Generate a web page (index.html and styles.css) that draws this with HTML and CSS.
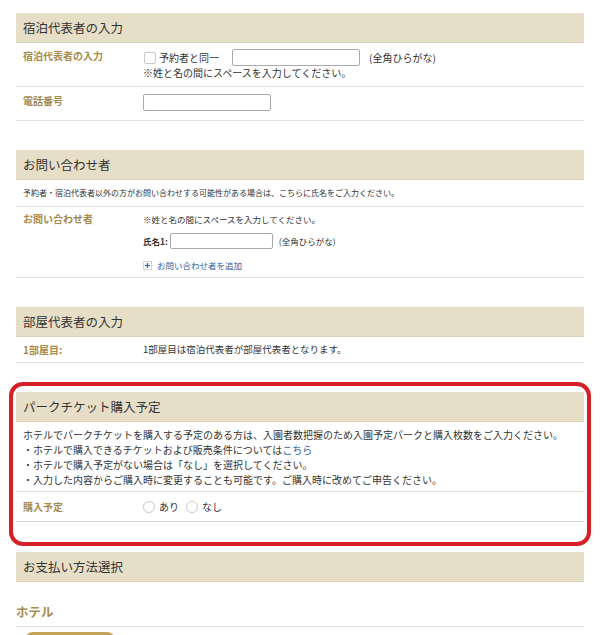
FILE: index.html
```html
<!DOCTYPE html>
<html lang="ja">
<head>
    <meta charset="UTF-8">
    <meta name="viewport" content="width=device-width, initial-scale=1.0">
    <title>ご予約情報の入力</title>
    <link rel="stylesheet" href="styles.css">
</head>
<body>
    <div class="container">

        <!-- 宿泊代表者 -->
        <div class="section first">
            <h2 class="section-title">宿泊代表者の入力</h2>
            <div class="row row-guest">
                <div class="row-label">宿泊代表者の入力</div>
                <div class="row-value">
                    <div class="line">
                        <label class="check"><span class="checkbox"></span>予約者と同一</label>
                        <input type="text" class="field">
                        <span class="hint">(全角ひらがな)</span>
                    </div>
                    <div class="note">※姓と名の間にスペースを入力してください。</div>
                </div>
            </div>
            <div class="row row-tel">
                <div class="row-label">電話番号</div>
                <div class="row-value">
                    <input type="text" class="field">
                </div>
            </div>
        </div>

        <!-- お問い合わせ者 -->
        <div class="section">
            <h2 class="section-title">お問い合わせ者</h2>
            <div class="row row-desc">予約者・宿泊代表者以外の方がお問い合わせする可能性がある場合は、こちらに氏名をご入力ください。</div>
            <div class="row row-contact">
                <div class="row-label">お問い合わせ者</div>
                <div class="row-value small">
                    <div class="note">※姓と名の間にスペースを入力してください。</div>
                    <div class="line name-line">
                        <span class="name-label">氏名1:</span>
                        <input type="text" class="field field-short">
                        <span class="hint">(全角ひらがな)</span>
                    </div>
                    <a href="#" class="add-link">
                        <svg width="9" height="9" viewBox="0 0 9 9">
                            <rect x="0.5" y="0.5" width="8" height="8" fill="#fff" stroke="#d5d5d5"/>
                            <path d="M4.5 2v5M2 4.5h5" stroke="#2f62a8" stroke-width="1.2"/>
                        </svg>
                        お問い合わせ者を追加
                    </a>
                </div>
            </div>
        </div>

        <!-- 部屋代表者 -->
        <div class="section">
            <h2 class="section-title">部屋代表者の入力</h2>
            <div class="row row-room">
                <div class="row-label">1部屋目:</div>
                <div class="row-value plain">1部屋目は宿泊代表者が部屋代表者となります。</div>
            </div>
        </div>

        <!-- パークチケット (注目枠) -->
        <div class="highlight">
            <div class="section">
                <h2 class="section-title">パークチケット購入予定</h2>
                <div class="row row-info">
                    <p>ホテルでパークチケットを購入する予定のある方は、入園者数把握のため入園予定パークと購入枚数をご入力ください。</p>
                    <p>・ホテルで購入できるチケットおよび販売条件については<a href="#">こちら</a></p>
                    <p>・ホテルで購入予定がない場合は「なし」を選択してください。</p>
                    <p>・入力した内容からご購入時に変更することも可能です。ご購入時に改めてご申告ください。</p>
                </div>
                <div class="row row-plan">
                    <div class="row-label">購入予定</div>
                    <div class="row-value">
                        <label class="radio"><span class="radio-dot"></span>あり</label>
                        <label class="radio"><span class="radio-dot"></span>なし</label>
                    </div>
                </div>
            </div>
        </div>

        <!-- お支払い -->
        <div class="section payment">
            <h2 class="section-title">お支払い方法選択</h2>
            <h3 class="sub-title">ホテル</h3>
            <div class="tab"></div>
        </div>

    </div>
</body>
</html>
```

FILE: styles.css
```css
body {
    margin: 0;
    background-color: #fff;
    font-family: "Noto Sans CJK JP", "Noto Sans", sans-serif;
    color: #333;
    overflow: hidden;
}
.container {
    padding: 13px 16px 0;
}
.section {
    margin-top: 29px;
}
.section.first {
    margin-top: 0;
}
.section-title {
    margin: 0;
    padding-left: 7px;
    height: 30px;
    line-height: 30px;
    font-size: 12.5px;
    font-weight: normal;
    color: #333;
    background-color: #e7dec7;
    border-bottom: 1px solid #ddd3ba;
    box-sizing: border-box;
}
.row {
    display: flex;
    border-bottom: 1px solid #e3e0d8;
    font-size: 10px;
}
.row-label {
    width: 120px;
    padding-left: 7px;
    font-weight: bold;
    color: #a68b4c;
    flex-shrink: 0;
}
.row-value {
    flex: 1;
}
.line {
    display: flex;
    align-items: center;
}
.field {
    width: 128px;
    height: 17px;
    margin: 0;
    padding: 0 3px;
    border: 1px solid #a9a9a9;
    border-radius: 2px;
    box-sizing: border-box;
    background: #fff;
    outline: none;
}
.field-short {
    width: 103px;
    height: 16px;
}
.hint {
    margin-left: 9px;
}
.note {
    line-height: 14px;
}
.check {
    display: flex;
    align-items: center;
    width: 88px;
    padding-left: 1px;
}
.checkbox {
    width: 10px;
    height: 10px;
    margin-right: 3px;
    border: 1px solid #c8c8c8;
    border-radius: 2px;
    background: #fff;
}

/* 宿泊代表者 */
.row-guest {
    height: 44px;
    box-sizing: border-box;
}
.row-guest .row-label {
    padding-top: 7px;
    line-height: 12px;
}
.row-guest .row-value {
    padding-top: 6px;
}
.row-tel {
    height: 34px;
    box-sizing: border-box;
}
.row-tel .row-label {
    padding-top: 8px;
    line-height: 12px;
}
.row-tel .row-value {
    padding-top: 7px;
}

/* お問い合わせ者 */
.row-desc {
    display: block;
    padding-left: 7px;
    height: 27px;
    line-height: 26px;
    font-size: 8px;
    box-sizing: border-box;
}
.row-contact {
    height: 71px;
    box-sizing: border-box;
}
.row-contact .row-label {
    padding-top: 6px;
    line-height: 12px;
}
.row-value.small {
    font-size: 8.5px;
    padding-top: 6px;
}
.row-value.small .note {
    line-height: 12px;
}
.name-line {
    margin-top: 8px;
}
.name-label {
    font-weight: bold;
    margin-right: 2px;
}
.name-line .hint {
    margin-left: 6px;
}
.add-link {
    display: flex;
    align-items: center;
    gap: 5px;
    margin-top: 10px;
    line-height: 12px;
    color: #2f62a8;
    text-decoration: none;
}

/* 部屋代表者 */
.row-room {
    height: 26px;
    line-height: 25px;
    box-sizing: border-box;
}
.row-value.plain {
    font-size: 9.5px;
}

/* 注目枠 */
.highlight {
    margin: 19px -7px 0;
    padding: 6px 3px 20px;
    border: 4px solid #d61f27;
    border-radius: 14px;
}
.highlight .section {
    margin-top: 0;
}
.row-info {
    display: block;
    padding: 5px 7px 4px;
}
.row-info p {
    margin: 0;
    line-height: 15px;
}
.row-info a {
    color: #2f62a8;
    text-decoration: none;
}
.row-plan {
    height: 30px;
    line-height: 29px;
    box-sizing: border-box;
    border-bottom-color: #d6d6d6;
}
.row-plan .row-value {
    display: flex;
    align-items: center;
    gap: 7px;
}
.radio {
    display: flex;
    align-items: center;
}
.radio-dot {
    width: 10px;
    height: 10px;
    margin-right: 4px;
    border: 1px solid #c8c8c8;
    border-radius: 50%;
    background: #fff;
}

/* お支払い */
.section.payment {
    margin-top: 6px;
}
.sub-title {
    margin: 0;
    padding-top: 20px;
    padding-bottom: 4px;
    line-height: 20px;
    font-size: 12.5px;
    font-weight: bold;
    color: #a68b4c;
    border-bottom: 1px solid #e3e0d8;
}
.tab {
    width: 90px;
    height: 30px;
    margin: 5px 0 0 9px;
    border-radius: 8px 8px 0 0;
    background-color: #c4a458;
}
```
